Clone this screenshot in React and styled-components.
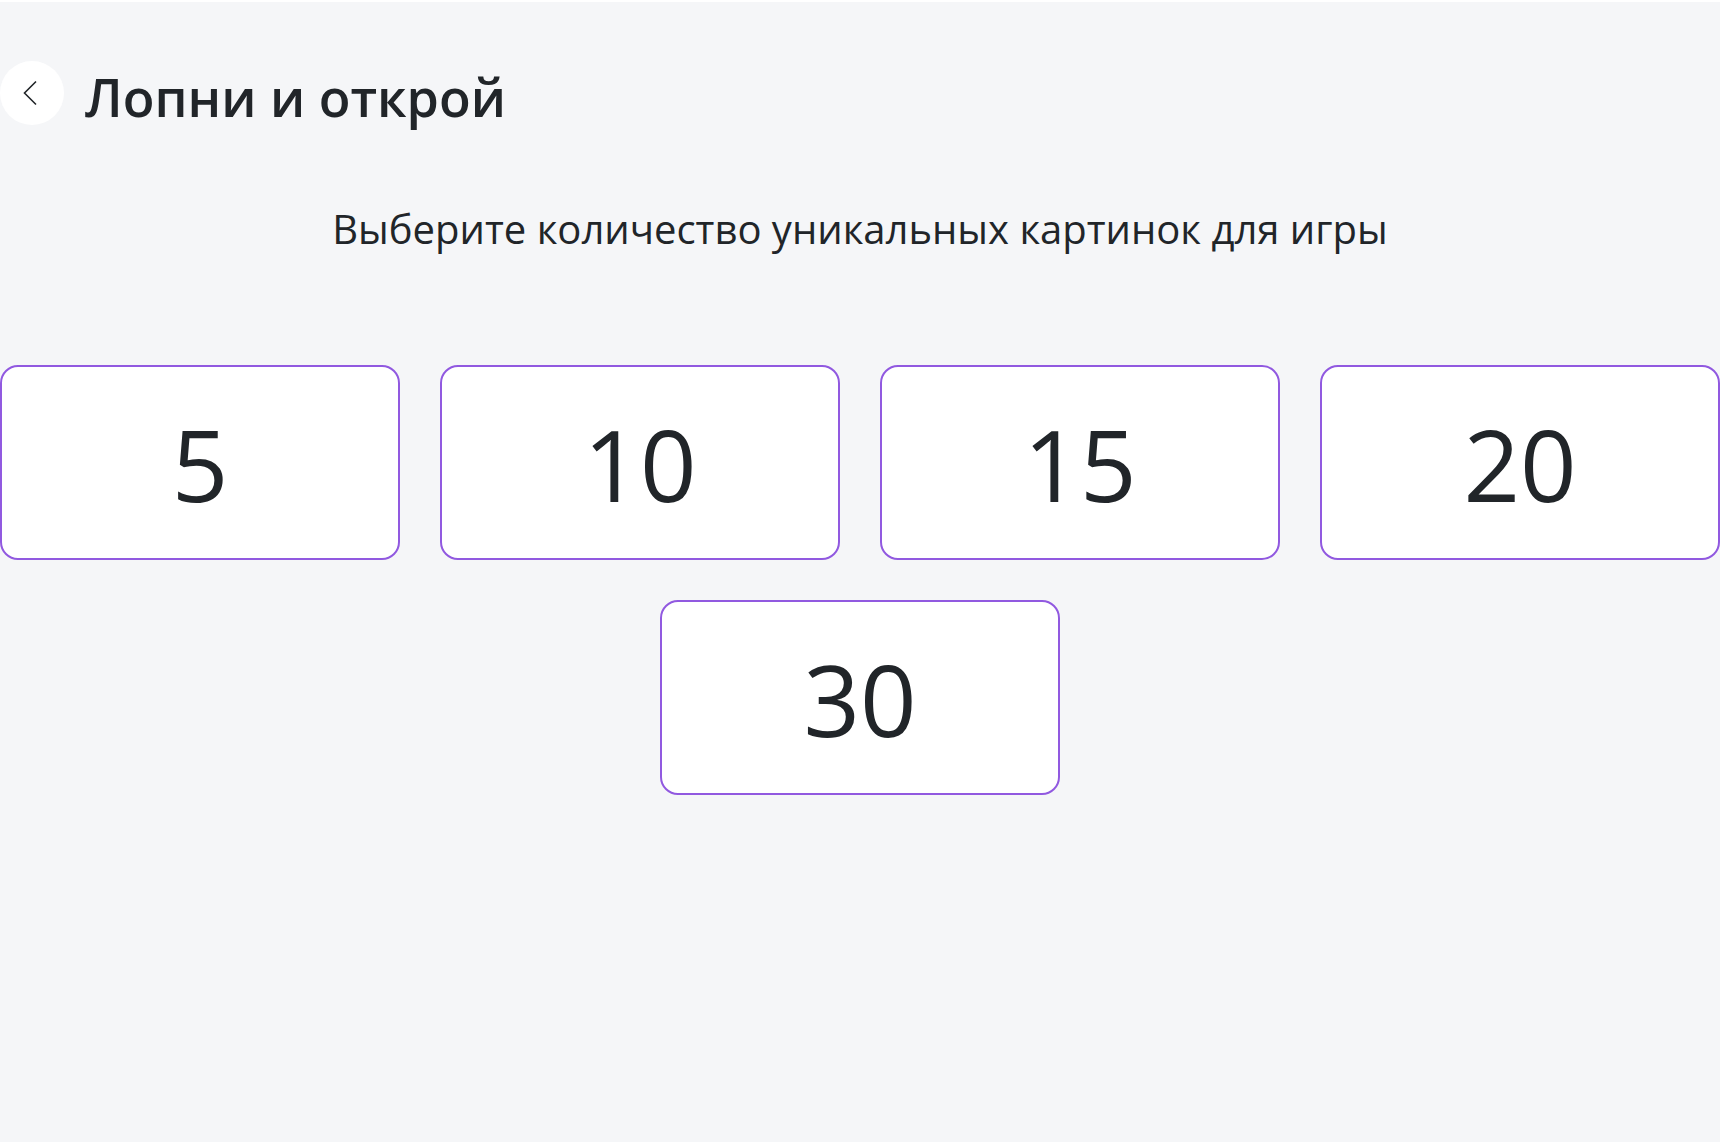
import React, { useState } from 'react';
import styled, { createGlobalStyle } from 'styled-components';

const GlobalStyle = createGlobalStyle`
  html, body {
    margin: 0;
    padding: 0;
    background: #f5f6f8;
    font-family: "Open Sans", "Noto Sans", sans-serif;
    color: #212529;
  }
  * { box-sizing: border-box; }
`;

const counts = [5, 10, 15, 20, 30];

function App() {
  const [selected, setSelected] = useState(null);

  return (
    <>
      <GlobalStyle />
      <Page>
        <Header>
          <BackButton aria-label="Назад">
            <svg width="16" height="26" viewBox="0 0 16 26" fill="none">
              <path d="M14 1.5 L2.5 13 L14 24.5" stroke="#212529" strokeWidth="1.6" />
            </svg>
          </BackButton>
          <Title>Лопни и открой</Title>
        </Header>
        <Subtitle>Выберите количество уникальных картинок для игры</Subtitle>
        <Options>
          {counts.map((n) => (
            <Option key={n} active={selected === n} onClick={() => setSelected(n)}>
              {n}
            </Option>
          ))}
        </Options>
      </Page>
    </>
  );
}

export default App;

const Page = styled.div`
  min-height: 100vh;
  border-top: 2px solid #ffffff;
  padding-top: 59px;
`;

const Header = styled.div`
  display: flex;
  align-items: flex-start;
  gap: 21px;
`;

const BackButton = styled.button`
  width: 64px;
  height: 64px;
  border-radius: 50%;
  border: none;
  background: #ffffff;
  display: flex;
  align-items: center;
  justify-content: center;
  padding: 0 5px 0 0;
  cursor: pointer;
`;

const Title = styled.h1`
  margin: 0;
  padding-top: 4px;
  font-size: 52px;
  font-weight: 600;
  line-height: 64px;
  color: #212529;
`;

const Subtitle = styled.p`
  margin: 74px 0 0;
  text-align: center;
  font-size: 40px;
  line-height: 52px;
  font-weight: 400;
  color: #212529;
`;

const Options = styled.div`
  display: flex;
  flex-wrap: wrap;
  justify-content: center;
  gap: 40px;
  margin-top: 110px;
`;

const Option = styled.button`
  width: 400px;
  height: 195px;
  background: #ffffff;
  border: 2px solid ${(p) => (p.active ? '#6a2bd0' : '#9159e0')};
  border-radius: 18px;
  font-family: "Open Sans", "Noto Sans", sans-serif;
  font-size: 99px;
  font-weight: 400;
  color: #212529;
  display: flex;
  align-items: center;
  justify-content: center;
  padding: 2px 0 0;
  cursor: pointer;
`;
